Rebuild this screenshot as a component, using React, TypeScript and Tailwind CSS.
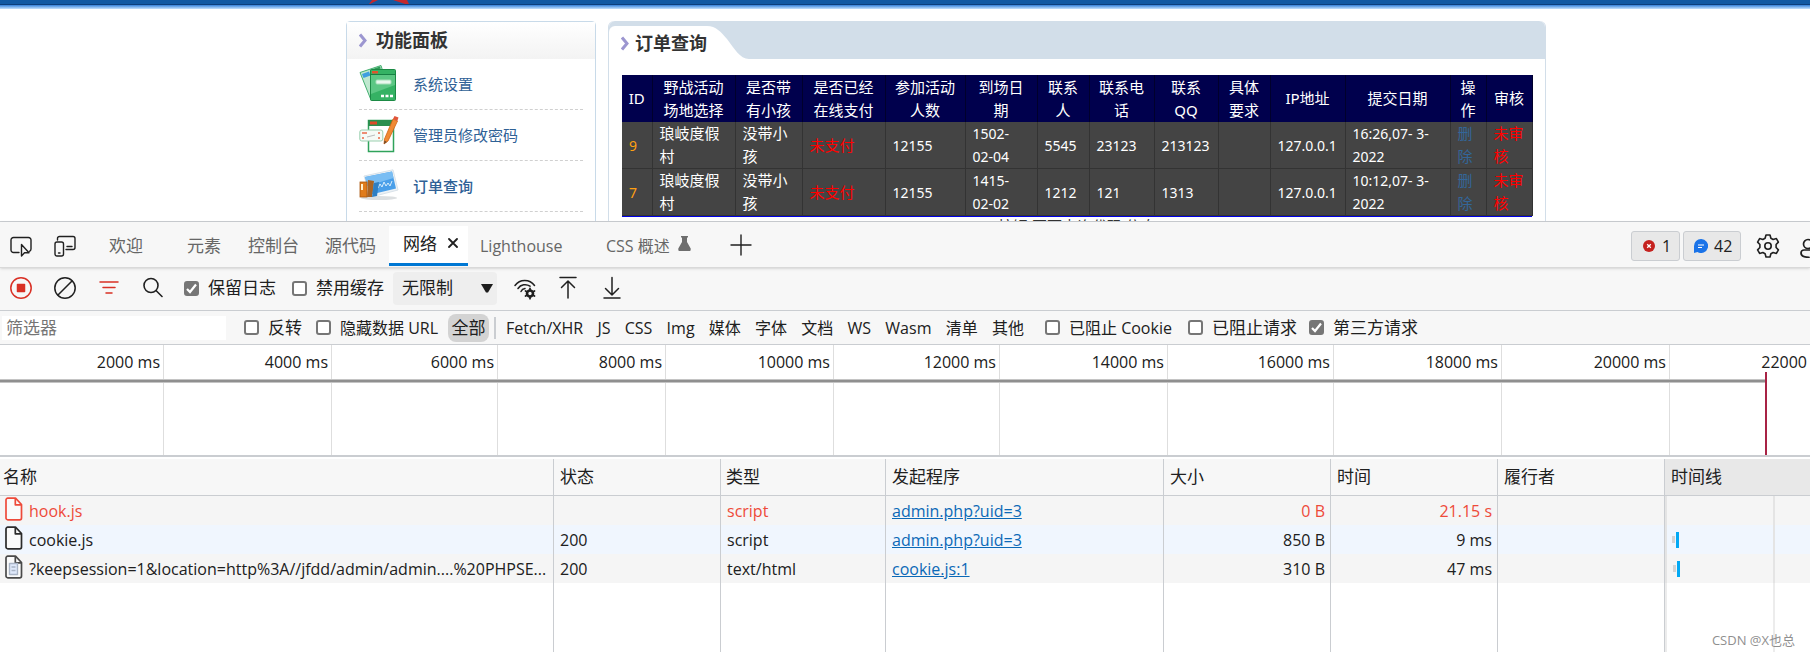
import React from "react";

const ui = "font-['Open_Sans','Noto_Sans_CJK_SC',sans-serif]";
const site = "font-['Noto_Sans','Noto_Sans_CJK_SC',sans-serif]";

/* ---------- Admin page ---------- */

function Chevron() {
  return (
    <svg width="9" height="15" viewBox="0 0 9 15" fill="none" stroke="#9c96d0" strokeWidth="3" aria-hidden="true">
      <path d="M1 1.500 6 7.500 1 13.500" />
    </svg>
  );
}

function SettingsIcon() {
  return (
    <svg width="38" height="40" viewBox="0 0 38 40" aria-hidden="true">
      <path d="M1 8.500 22 1.500 31 30 12 36z" fill="#bfe8cf" stroke="#43b070" />
      <path d="m3 10 7-2.600 1.500 4L4.500 14z" fill="#3f9fe0" />
      <path d="m11 6 10-3.500.8 2L12 8z" fill="#2f9c57" />
      <rect x="11.500" y="5.500" width="25" height="31" rx="1" fill="#35b264" stroke="#1c8a45" />
      <path d="M12 11h24v10L12 30z" fill="#5cc784" />
      <path d="M11.500 10.500h25" stroke="#168043" />
      <rect x="13" y="7" width="6" height="2.500" fill="#e2532d" />
      <rect x="17" y="16" width="15" height="4" rx="1" fill="#e9f8ee" stroke="#a6dfb9" />
      <path d="M22 32h3m1.500 0h3m1.500 0h3" stroke="#fff" strokeWidth="2.500" />
    </svg>
  );
}

function PasswordIcon() {
  return (
    <svg width="40" height="40" viewBox="0 0 40 40" aria-hidden="true">
      <rect x="9.500" y="5.500" width="25" height="31" fill="#fff" stroke="#2fa35b" strokeWidth="1.500" />
      <path d="M9 5h26v6H9z" fill="#2b8f4e" />
      <rect x="11" y="6.500" width="7" height="3" fill="#dd4b28" />
      <rect x=".8" y="15" width="23" height="11" rx="2" fill="#f5faf6" stroke="#9bd0b0" />
      <path d="M3 18h5M3 23h2m14-5h2m-2 5h2" stroke="#ea6a4a" strokeWidth="1.500" />
      <path d="m8 22 8-2" stroke="#bbb" />
      <path d="M34 4 38.500 6 29 26l-4 3 .500-5z" fill="#f08a34" stroke="#cf6213" strokeWidth=".8" />
      <path d="m34 4 1.500-3 4 1.500-1.200 3.500z" fill="#e0553a" />
      <path d="m25 29 .400-3.500 2.500 1.500z" fill="#6b4a2c" />
    </svg>
  );
}

function OrderIcon() {
  return (
    <svg width="40" height="34" viewBox="0 0 40 34" aria-hidden="true">
      <ellipse cx="20" cy="29" rx="18" ry="2" fill="#dcdfe1" />
      <path d="M5 7 34 .8 39 21 12 28z" fill="#edf2f6" stroke="#d9e2e9" />
      <path d="M6 8 33 2.500 37 19.500 12 25.500z" fill="#4a9fe9" />
      <path d="M6 8 33 2.500 34.500 9 8 17z" fill="#79bdf3" />
      <path d="m17 14 2 5 2-4 2 3 2-5 2 4 2-3 2 3 2-5" fill="none" stroke="#d8edfc" />
      <rect x="1" y="13" width="7" height="15" fill="#e07c1c" stroke="#a8560e" strokeWidth=".8" />
      <path d="m9 11 6 1-2 16H8z" fill="#a96526" />
      <path d="m15 14 5-1-2 14-5 1z" fill="#2e7fc4" />
      <path d="M3 15v6" stroke="#fff0cf" strokeWidth="2" />
    </svg>
  );
}

const menu = [
  { label: "系统设置", icon: <SettingsIcon />, active: false },
  { label: "管理员修改密码", icon: <PasswordIcon />, active: false },
  { label: "订单查询", icon: <OrderIcon />, active: true },
];

const orderCols = [
  { w: "w-[30px]", lines: ["ID"] },
  { w: "w-[83px]", lines: ["野战活动", "场地选择"] },
  { w: "w-[67px]", lines: ["是否带", "有小孩"] },
  { w: "w-[83px]", lines: ["是否已经", "在线支付"] },
  { w: "w-[80px]", lines: ["参加活动", "人数"] },
  { w: "w-[72px]", lines: ["到场日", "期"] },
  { w: "w-[52px]", lines: ["联系", "人"] },
  { w: "w-[65px]", lines: ["联系电", "话"] },
  { w: "w-[64px]", lines: ["联系", "QQ"] },
  { w: "w-[52px]", lines: ["具体", "要求"] },
  { w: "w-[75px]", lines: ["IP地址"] },
  { w: "w-[105px]", lines: ["提交日期"] },
  { w: "w-[36px]", lines: ["操", "作"] },
  { w: "w-[46px]", lines: ["审核"] },
];

const orders = [
  ["9", "琅岐度假|村", "没带小|孩", "未支付", "12155", "1502-|02-04", "5545", "23123", "213123", "", "127.0.0.1", "16:26,07- 3-|2022", "删|除", "未审|核"],
  ["7", "琅岐度假|村", "没带小|孩", "未支付", "12155", "1415-|02-02", "1212", "121", "1313", "", "127.0.0.1", "10:12,07- 3-|2022", "删|除", "未审|核"],
];

function orderTone(i: number) {
  if (i === 0) return "text-[#ffa012] text-sm";
  if (i === 3 || i === 13) return "text-[#ff0000] text-[15px]";
  if (i === 12) return "text-[#336699] text-[15px]";
  if (i === 1 || i === 2) return "text-white text-[15px]";
  return "text-white text-sm";
}

function Lines({ items }: { items: string[] }) {
  return (
    <>
      {items.map((t) => (
        <span key={t} className="block leading-[23px]">{t}</span>
      ))}
    </>
  );
}

function AdminPage() {
  return (
    <div className={`h-[221px] shrink-0 overflow-hidden bg-white ${site}`}>
      <div className="h-[5px] border-b border-[#0c3f7c] bg-[#1159a3] pl-[369px]">
        <svg width="40" height="4" viewBox="0 0 40 4" fill="#c4282c" aria-hidden="true">
          <path d="M3 0h6L1 4H0zM24 0h14l2 4h-4z" />
        </svg>
      </div>
      <div className="h-1 bg-linear-to-b from-[#2f80da] to-[#c5e2fc]" />
      <div className="ml-[346px] mt-3 flex max-w-[1200px] gap-3">
        <aside className="h-[260px] w-[250px] shrink-0 rounded-t-sm border border-[#c8dae9]">
          <h2 className="flex h-[37px] items-center gap-2 bg-linear-to-b from-white to-[#f3f3f3] pl-3 text-[18px] font-bold text-[#333]">
            <Chevron />
            功能面板
          </h2>
          <nav className="px-3">
            {menu.map((m) => (
              <a
                key={m.label}
                href="#"
                className={`flex h-[51px] items-center border-b border-dashed border-[#d0d0d0] text-[15px] text-[#2f6196] ${m.active ? "font-medium" : ""}`}
              >
                <span className="w-[54px]">{m.icon}</span>
                {m.label}
              </a>
            ))}
          </nav>
        </aside>
        <main className="h-[260px] min-w-0 flex-1 rounded-t-md border-x border-[#d2dee9]">
          <div className="flex h-[38px] rounded-t-md bg-[#d2dee9] pt-[5px]">
            <h2 className="flex items-center gap-[5px] rounded-tl-md bg-white pl-3 pt-[2px] text-[18px] font-bold text-[#333]">
              <Chevron />
              订单查询
            </h2>
            <svg width="42" height="33" viewBox="0 0 42 33" fill="#fff" aria-hidden="true">
              <path d="M0 0C9 0 14 6 20 13C27 22 33 33 42 33H0Z" />
            </svg>
          </div>
          <div className="px-[13px] pt-4">
            <table className="w-full table-fixed border-collapse border-b border-[#0000e6]">
              <thead>
                <tr className="h-[47px] bg-[#00004d] text-[15px] text-white">
                  {orderCols.map((c) => (
                    <th key={c.lines.join("")} className={`${c.w} border-r border-[#00002c] p-0 text-center font-normal`}>
                      <Lines items={c.lines} />
                    </th>
                  ))}
                </tr>
              </thead>
              <tbody>
                {orders.map((o) => (
                  <tr key={o[0]} className="h-[46px] bg-[#444]">
                    {o.map((v, i) => (
                      <td key={i} className={`whitespace-nowrap border-b border-r border-[#333] p-0 pl-[7px] ${orderTone(i)}`}>
                        {i === 12 ? (
                          <a href="#"><Lines items={v.split("|")} /></a>
                        ) : (
                          <Lines items={v.split("|")} />
                        )}
                      </td>
                    ))}
                  </tr>
                ))}
              </tbody>
              <tfoot>
                <tr className="h-px bg-[#0000e6]">
                  <td colSpan={14} className="p-0" />
                </tr>
              </tfoot>
            </table>
            <p className="text-center text-[15px] leading-[19px] text-[#333]">按钮 页面查询代码 信息</p>
          </div>
        </main>
      </div>
    </div>
  );
}

/* ---------- Developer tools ---------- */

function IconButton({ label, className, children }: { label: string; className: string; children: React.ReactNode }) {
  return (
    <button type="button" aria-label={label} className={`flex h-6 shrink-0 items-center ${className}`}>
      {children}
    </button>
  );
}

function Stroke({ w = 22, children, color = "#202020", sw = 1.4 }: { w?: number; children: React.ReactNode; color?: string; sw?: number }) {
  return (
    <svg width={w} height="24" viewBox={`0 0 ${w} 24`} fill="none" stroke={color} strokeWidth={sw} strokeLinecap="round" strokeLinejoin="round" className="shrink-0" aria-hidden="true">
      {children}
    </svg>
  );
}

function Check({ label, checked, className }: { label: string; checked?: boolean; className: string }) {
  return (
    <label className={`flex shrink-0 items-center gap-[9px] whitespace-nowrap ${className}`}>
      <span className="grid">
        <input
          type="checkbox"
          defaultChecked={checked}
          className="peer col-start-1 row-start-1 size-[15px] appearance-none rounded-[3px] border-2 border-[#767676] bg-white checked:bg-[#767676]"
        />
        <svg viewBox="0 0 15 15" className="pointer-events-none invisible col-start-1 row-start-1 size-[15px] peer-checked:visible" fill="none" stroke="#fff" strokeWidth="2.200" aria-hidden="true">
          <path d="m3 8 3 3 6-7.500" />
        </svg>
      </span>
      {label}
    </label>
  );
}

function TabBar() {
  const tab = "shrink-0 whitespace-nowrap text-left text-[#666]";
  return (
    <div className="flex h-[46px] shrink-0 items-center overflow-hidden border-b border-[#d9d9d9] pl-[10px] pt-[2px] text-[17px] shadow-sm">
      <IconButton label="选择元素" className="w-11">
        <Stroke>
          <path d="M9 18.500H3.500A2.500 2.500 0 0 1 1 16V6A2.500 2.500 0 0 1 3.500 3.500h15A2.500 2.500 0 0 1 21 6v9a2.500 2.500 0 0 1-1.500 2.300" />
          <path d="M11.500 10.500v11.500l3-3.300h4.500z" />
        </Stroke>
      </IconButton>
      <IconButton label="设备仿真" className="w-[55px]">
        <Stroke>
          <path d="M3.500 6V4.500A2 2 0 0 1 5.500 2.500h13.500a2 2 0 0 1 2 2v9a2 2 0 0 1-2 2h-7M13 12.500h5" />
          <rect x="1" y="8" width="8.500" height="14" rx="2" />
          <path d="M4.500 19h1.500" />
        </Stroke>
      </IconButton>
      <button type="button" className={`w-[78px] ${tab}`}>欢迎</button>
      <button type="button" className={`w-[61px] ${tab}`}>元素</button>
      <button type="button" className={`w-[77px] ${tab}`}>控制台</button>
      <button type="button" className={`w-[64px] ${tab}`}>源代码</button>
      <div className="mr-3 flex h-10 w-[79px] shrink-0 items-center gap-[11px] border-b-[3px] border-[#0078d4] bg-white pl-[14px] text-[#202020]">
        <button type="button" className="whitespace-nowrap">网络</button>
        <IconButton label="关闭标签" className="w-[10px]">
          <Stroke w={10} sw={1.8}><path d="m1 7 8 8m0-8-8 8" /></Stroke>
        </IconButton>
      </div>
      <button type="button" className={`w-[126px] text-base ${tab}`}>Lighthouse</button>
      <button type="button" className={`flex w-[124px] items-center gap-2 text-base ${tab}`}>
        CSS 概述
        <svg width="13" height="15" viewBox="0 0 13 15" fill="#6e6e6e" className="mb-1" aria-hidden="true">
          <path d="M3 0h7v1.500H9V6l3.700 6.500Q13 14.500 12 15H1Q0 14.500.3 12.500L4 6V1.500H3z" />
        </svg>
      </button>
      <IconButton label="更多工具" className="w-6">
        <Stroke><path d="M11 1v20M1 11h20" /></Stroke>
      </IconButton>
      <div className="ml-auto flex shrink-0 items-center gap-[3px] text-base text-[#202020]">
        <button type="button" className="flex h-[30px] w-[49px] items-center gap-[7px] rounded-[3px] border border-[#cacdd1] bg-[#e8e8e8] pl-[11px]">
          <svg width="12" height="12" viewBox="0 0 12 12" aria-hidden="true">
            <circle cx="6" cy="6" r="6" fill="#c5221f" />
            <path d="m4.200 4.200 3.600 3.600m0-3.600L4.200 7.800" stroke="#fff" strokeWidth="1.300" />
          </svg>
          1
        </button>
        <button type="button" className="flex h-[30px] w-[58px] items-center gap-[6px] rounded-[3px] border border-[#cacdd1] bg-[#e8e8e8] pl-[10px]">
          <svg width="14" height="14" viewBox="0 0 14 14" aria-hidden="true">
            <path d="M7 0a7 7 0 1 1-3.500 13L0 14V7a7 7 0 0 1 7-7z" fill="#1a73e8" />
            <path d="M4 6h6M4 8.500h4" stroke="#fff" strokeWidth="1.200" />
          </svg>
          42
        </button>
        <IconButton label="设置" className="ml-3 w-[41px]">
          <Stroke w={24} sw={1.6}>
            <path d="M10 1h4l.9 3.300 2.200 1.200 3.300-.9 2 3.500-2.300 2.400v3l2.300 2.400-2 3.500-3.300-.9-2.200 1.200L14 23h-4l-.9-3.300-2.200-1.200-3.300.9-2-3.500 2.300-2.400v-3L1.600 8.100l2-3.500 3.300.9 2.200-1.200z" />
            <circle cx="12" cy="12" r="3.200" />
          </Stroke>
        </IconButton>
        <IconButton label="反馈" className="w-[10px] overflow-hidden">
          <Stroke w={24} sw={1.7}>
            <circle cx="8" cy="10" r="4.500" />
            <path d="M16 16H4a3 3 0 0 0-3 3c0 3 3 4.300 8 4.300" />
          </Stroke>
        </IconButton>
      </div>
    </div>
  );
}

function Toolbar() {
  return (
    <div className="flex h-[43px] shrink-0 items-center border-b border-[#cacdd1] pb-[2px] pl-[10px] text-[17px]">
      <IconButton label="停止记录" className="w-11">
        <Stroke color="#d93025" sw={1.5}>
          <circle cx="11" cy="12" r="10.200" />
          <rect x="7.500" y="8.500" width="7" height="7" fill="#d93025" />
        </Stroke>
      </IconButton>
      <IconButton label="清除" className="w-[45px]">
        <Stroke sw={1.5}>
          <circle cx="11" cy="12" r="10.200" />
          <path d="M18 5 4 19" />
        </Stroke>
      </IconButton>
      <IconButton label="筛选" className="w-11">
        <Stroke w={20} color="#d93025" sw={1.5}>
          <path d="M1 6h18M4 11.500h12M7 17h6" />
        </Stroke>
      </IconButton>
      <IconButton label="搜索" className="w-[41px]">
        <Stroke w={20} sw={1.6}>
          <circle cx="8" cy="9.500" r="7" />
          <path d="m13 14.500 6 6" />
        </Stroke>
      </IconButton>
      <Check label="保留日志" checked className="w-[108px]" />
      <Check label="禁用缓存" className="w-[101px]" />
      <div className="grid w-[104px] shrink-0 items-center">
        <select aria-label="网络限制" className="col-start-1 row-start-1 h-[33px] w-full appearance-none rounded-sm bg-[#eee] pl-[9px]">
          <option>无限制</option>
        </select>
        <svg width="12" height="9" viewBox="0 0 12 9" fill="#1c1c1c" className="pointer-events-none col-start-1 row-start-1 mr-1 justify-self-end" aria-hidden="true">
          <path d="M0 0h12L7 8.500H5z" />
        </svg>
      </div>
      <IconButton label="网络条件" className="ml-[17px] w-[45px]">
        <Stroke w={22} sw={1.5}>
          <path d="M1 9.500a12 12 0 0 1 19.500 0M4 12.500a8.500 8.500 0 0 1 12-2.300M7 15.500a5 5 0 0 1 4-3" />
          <circle cx="16" cy="17.500" r="3" strokeWidth="2.600" />
          <path d="M16 12.300v2m0 6.400v2M11.500 15l1.700 1m5.600 3 1.700 1m0-5-1.700 1m-5.600 3-1.700 1" strokeWidth="1.800" />
        </Stroke>
      </IconButton>
      <IconButton label="导入 HAR" className="w-11">
        <Stroke w={18} sw={1.5}><path d="M1 1.500h16M9 22V5M2.500 11.500 9 5l6.500 6.500" /></Stroke>
      </IconButton>
      <IconButton label="导出 HAR" className="w-6">
        <Stroke w={18} sw={1.5}><path d="M1 22h16M9 1.500V19M2.500 12.500 9 19l6.500-6.500" /></Stroke>
      </IconButton>
    </div>
  );
}

const kinds = ["Fetch/XHR", "JS", "CSS", "Img", "媒体", "字体", "文档", "WS", "Wasm", "清单", "其他"];

function FilterBar() {
  return (
    <div className="flex h-[34px] shrink-0 items-center border-b border-[#cacdd1] pl-[2px] text-base">
      <input aria-label="筛选器" placeholder="筛选器" className="mr-[18px] h-6 w-[224px] bg-white px-1 text-[17px] placeholder:text-[#757575]" />
      <Check label="反转" className="w-[72px] text-[17px]" />
      <Check label="隐藏数据 URL" className="w-[132px]" />
      <button type="button" className="h-7 w-[41px] shrink-0 rounded-lg bg-[#d3d3d3] text-[17px]">全部</button>
      <div className="ml-[5px] mr-[10px] h-[22px] w-[2px] shrink-0 bg-[#cacdd1]" />
      <div className="flex w-[539px] shrink-0 justify-between pr-[21px]">
        {kinds.map((k) => (
          <button key={k} type="button" className="whitespace-nowrap">{k}</button>
        ))}
      </div>
      <Check label="已阻止 Cookie" className="w-[143px]" />
      <Check label="已阻止请求" className="w-[121px] text-[17px]" />
      <Check label="第三方请求" checked className="text-[17px]" />
    </div>
  );
}

const ticks = ["2000 ms", "4000 ms", "6000 ms", "8000 ms", "10000 ms", "12000 ms", "14000 ms", "16000 ms", "18000 ms", "20000 ms"];

function Overview() {
  return (
    <div className="relative h-[112px] shrink-0 overflow-hidden border-b-2 border-[#cacdd1] bg-white">
      <div className="grid h-full grid-cols-[164fr_168fr_166fr_168fr_168fr_166fr_168fr_166fr_168fr_168fr_140fr] text-base">
        {ticks.map((t) => (
          <div key={t} className="border-r border-[#dedede] pr-[3px] pt-[5px] text-right leading-6">{t}</div>
        ))}
        <div className="whitespace-nowrap pr-[3px] pt-[5px] text-right leading-6">22000</div>
      </div>
      <div className="absolute left-0 right-[45px] top-[34px] h-1 border-y border-[#c4c4c4] bg-[#8f8f8f]" />
      <div className="absolute bottom-0 right-[43px] top-[27px] w-[2px] bg-[#a82345]" />
    </div>
  );
}

function FileIcon({ color, doc }: { color: string; doc?: boolean }) {
  return (
    <svg width="18" height="24" viewBox="0 0 18 24" fill="#fff" stroke={color} strokeWidth="1.700" strokeLinejoin="round" className="mb-1 shrink-0" aria-hidden="true">
      <path d="M1 3a1.800 1.800 0 0 1 1.800-1.800H10.500L16.500 7.500V21a1.800 1.800 0 0 1-1.800 1.800H2.800A1.800 1.800 0 0 1 1 21z" fill="#fafafa" />
      <path d="M10.300 1.500V7.800h6" fill="none" />
      {doc && <path d="M4.500 8.500h8v11h-8zM6.500 12h4M6.500 15.500h4" fill="#dfe9fb" stroke="#a9b4c6" strokeWidth="1.400" />}
    </svg>
  );
}

const requests = [
  { name: "hook.js", status: "", type: "script", from: "admin.php?uid=3", size: "0 B", time: "21.15 s", row: "bg-[#f5f5f5] text-[#ee4a3a]", icon: "#ee4a3a", bar: "" },
  { name: "cookie.js", status: "200", type: "script", from: "admin.php?uid=3", size: "850 B", time: "9 ms", row: "bg-[#f0f6fe]", icon: "#2b2b2b", bar: "pl-[5px]" },
  { name: "?keepsession=1&location=http%3A//jfdd/admin/admin....%20PHPSE...", status: "200", type: "text/html", from: "cookie.js:1", size: "310 B", time: "47 ms", row: "bg-[#f5f5f5]", icon: "#4a4a4a", bar: "pl-[6px]" },
];

const headers = [
  { t: "名称", c: "pl-[3px]" },
  { t: "状态", c: "w-[167px] pl-[6px]" },
  { t: "类型", c: "w-[165px] pl-[5px]" },
  { t: "发起程序", c: "w-[278px] pl-[6px]" },
  { t: "大小", c: "w-[167px] pl-[6px]" },
  { t: "时间", c: "w-[167px] pl-[6px]" },
  { t: "履行者", c: "w-[167px] pl-[6px]" },
  { t: "时间线", c: "w-[145px] bg-[#e8e8e8] pl-[6px]" },
];

function RequestTable() {
  const cell = "border-r border-[#cacdd1] p-0 pl-[6px]";
  return (
    <div className="min-h-0 flex-1 overflow-hidden border-t-2 border-white bg-white">
      <table className="w-full table-fixed border-separate border-spacing-0 text-base">
        <thead>
          <tr className="h-[37px] bg-[#f7f7f7] text-left text-[17px]">
            {headers.map((h) => (
              <th key={h.t} className={`border-b border-r border-[#cacdd1] p-0 font-normal last:border-r-0 ${h.c}`}>{h.t}</th>
            ))}
          </tr>
        </thead>
        <tbody>
          {requests.map((r) => (
            <tr key={r.name} className={`h-[29px] ${r.row}`}>
              <td className="border-r border-[#cacdd1] p-0 pl-[5px]">
                <div className="flex items-center gap-[6px]">
                  <FileIcon color={r.icon} doc={r.type === "text/html"} />
                  <span className="truncate">{r.name}</span>
                </div>
              </td>
              <td className={cell}>{r.status}</td>
              <td className={cell}>{r.type}</td>
              <td className={cell}><a href="#" className="text-[#0b69b7] underline">{r.from}</a></td>
              <td className={`${cell} pr-[5px] text-right`}>{r.size}</td>
              <td className={`${cell} pr-[5px] text-right`}>{r.time}</td>
              <td className={cell} />
              <td className="p-0">
                <div className={`flex h-[29px] w-[110px] items-center gap-px border-x-2 border-[#e4e4e4] ${r.bar}`}>
                  {r.bar && (
                    <>
                      <span className="h-[7px] w-[3px] bg-[#d3d3d3]" />
                      <span className="h-4 w-[3px] bg-[#03a9f4]" />
                    </>
                  )}
                </div>
              </td>
            </tr>
          ))}
          <tr className="h-[72px]">
            {headers.slice(1).map((h) => (
              <td key={h.t} className={cell} />
            ))}
            <td className="p-0 align-top">
              <div className="flex h-[72px]">
                <div className="w-[110px] shrink-0 border-x-2 border-[#ececec]" />
              </div>
            </td>
          </tr>
        </tbody>
      </table>
    </div>
  );
}

export default function App() {
  return (
    <div className="flex min-h-screen flex-col overflow-hidden bg-white">
      <AdminPage />
      <section className={`relative flex min-h-0 flex-1 flex-col border-t border-[#cacdd1] bg-[#f7f7f7] text-[#202020] ${ui}`}>
        <TabBar />
        <Toolbar />
        <FilterBar />
        <Overview />
        <RequestTable />
        <span className="absolute bottom-[5px] right-[15px] text-[13px] leading-5 text-[#8f8f8f]">CSDN @X也总</span>
      </section>
    </div>
  );
}
